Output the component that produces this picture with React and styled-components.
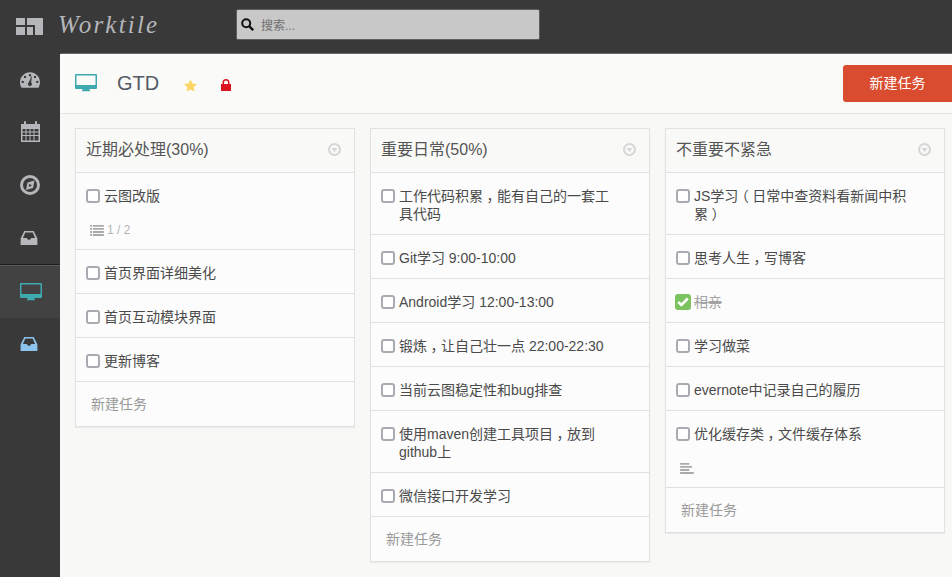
import React from 'react'
import styled, { createGlobalStyle } from 'styled-components'

const GlobalStyle = createGlobalStyle`
  html, body { margin: 0; padding: 0; height: 100%; background: #393939; overflow: hidden; }
  body { font-family: "Liberation Sans", "Noto Sans CJK SC", sans-serif; font-size: 14px; color: #444; }
  * { box-sizing: border-box; }
`

const Page = styled.div`
  width: 952px;
  height: 577px;
  display: flex;
  flex-direction: column;
  overflow: hidden;
`
const TopBar = styled.header`
  height: 53px;
  flex: none;
  display: flex;
  align-items: center;
  background: #393939;
`
const LogoMark = styled.svg`
  width: 27px;
  height: 17px;
  margin: -1px 0 0 16px;
  flex: none;
`
const LogoText = styled.span`
  width: 178px;
  margin: -3px 0 0 15px;
  font-family: "Liberation Serif", serif;
  font-style: italic;
  font-size: 25px;
  letter-spacing: 2.2px;
  color: #b4b6ba;
`
const SearchBox = styled.div`
  width: 304px;
  height: 31px;
  margin-top: -4px;
  display: flex;
  align-items: center;
  gap: 7px;
  padding: 0 0 1px 4px;
  background: #c8c8c8;
  border: 1px solid #5e5e5e;
  border-radius: 2px;
  font-size: 12px;
  color: #6f6f6f;
`
const Body = styled.div`
  flex: 1;
  min-height: 0;
  display: flex;
`
const Sidebar = styled.nav`
  width: 60px;
  flex: none;
  padding-top: 2px;
  background: #393939;
`
const NavGroup = styled.div`
  height: 210px;
  border-bottom: 1px solid #1f1f1f;
  box-shadow: 0 1px 0 #5a5a5a;
`
const NavItem = styled.div`
  height: 52px;
  display: flex;
  align-items: center;
  justify-content: center;
  padding: ${p => p.$pad || '0'};
  background: ${p => (p.$active ? '#424242' : 'transparent')};
`
const ActiveGap = styled.div`
  height: 1px;
`
const Main = styled.main`
  flex: 1;
  min-width: 0;
  background: #f8f8f7;
  border-top: 1px solid #6a6a6a;
  border-top-left-radius: 3px;
`
const BoardHeader = styled.div`
  height: 60px;
  display: flex;
  align-items: center;
  padding-left: 15px;
  background: #fafaf8;
  border-bottom: 1px solid #e3e3e3;
`
const BoardTitle = styled.h1`
  margin: 0 25px 0 20px;
  font-size: 20px;
  font-weight: 400;
  color: #555b66;
`
const LockIcon = styled.svg`
  margin: 2px 0 0 24px;
`
const StarIcon = styled.svg`
  margin-top: 3px;
`
const NewButton = styled.button`
  width: 109px;
  height: 37px;
  margin-left: auto;
  padding: 0 0 3px;
  border: 0;
  border-radius: 3px 0 0 3px;
  background: #d94c2f;
  color: #fff;
  font: inherit;
`
const Columns = styled.div`
  display: flex;
  align-items: flex-start;
  gap: 15px;
  padding: 14px 0 0 15px;
`
const Card = styled.section`
  width: 280px;
  flex: none;
  background: #fcfcfc;
  border: 1px solid #e1e1e1;
  box-shadow: 0 1px 1px rgba(0, 0, 0, 0.05);
`
const CardHead = styled.div`
  height: 44px;
  display: flex;
  align-items: center;
  justify-content: space-between;
  padding: 0 13px 2px 10px;
  background: #f9f9f8;
  border-bottom: 1px solid #e1e1e1;
  font-size: 16px;
  color: #555;
`
const CardTitle = styled.span`
  margin-bottom: 4px;
`
const Row = styled.div`
  border-bottom: 1px solid #e1e1e1;
  padding: 14px 28px 11px 10px;
`
const TaskLine = styled.div`
  display: flex;
  align-items: flex-start;
  gap: 4px;
  line-height: 18px;
  color: ${p => (p.$done ? '#a3a3a3' : '#4a4a4a')};
  text-decoration: ${p => (p.$done ? 'line-through' : 'none')};
`
const Box = styled.span`
  width: 14px;
  height: 14px;
  flex: none;
  margin-top: 2px;
  border: 2px solid #a9aab2;
  border-radius: 3px;
  background: #fff;
`
const DoneBox = styled.span`
  width: 16px;
  height: 16px;
  flex: none;
  margin: 1px -1px 0 -1px;
  display: flex;
  align-items: center;
  justify-content: center;
  border-radius: 3px;
  background: #7cc35f;
`
// half-width glyph with even padding, so the mark sits mid-cell like the reference font
const Punct = styled.span`
  font-feature-settings: "halt";
  padding: 0 3.5px;
`
const Meta = styled.div`
  height: 18px;
  margin: 16px 0 -1px 4px;
  display: flex;
  align-items: center;
  gap: 3px;
  font-size: 12px;
  color: #b4b4b4;
`
const AddTask = styled.div`
  height: 44px;
  padding-left: 15px;
  line-height: 44px;
  color: #9a9a9a;
`

const GaugeIcon = ({ color }) => (
  <svg width="20" height="16" viewBox="0 0 22 17">
    <path fill={color} fillRule="evenodd" d="M11 0C5 0 0 4.800 0 11c0 2.200.6 4.200 1.700 6h18.600C21.400 15.200 22 13.200 22 11 22 4.800 17 0 11 0zM11 2a1.300 1.300 0 1 1 0 2.600A1.300 1.300 0 0 1 11 2zM5.500 3.800a1.300 1.300 0 1 1 0 2.600 1.300 1.300 0 0 1 0-2.600zM16.500 3.800a1.300 1.300 0 1 1 0 2.600 1.300 1.300 0 0 1 0-2.600zM3 9.300a1.300 1.300 0 1 1 0 2.600 1.300 1.300 0 0 1 0-2.600zM19 9.300a1.300 1.300 0 1 1 0 2.600 1.300 1.300 0 0 1 0-2.600z" />
    <path fill="#393939" d="M12.600 4.500L13 4.700 12.300 11.200A2.200 2.200 0 1 1 9.800 11z" />
  </svg>
)

const CalendarIcon = ({ color }) => (
  <svg width="19" height="21" viewBox="0 0 19 21">
    <path fill={color} fillRule="evenodd" d="M0 3h3V1a1 1 0 0 1 2 0v2h9V1a1 1 0 0 1 2 0v2h3v18H0zM1.500 8v2.500h3V8zM5.500 8v2.500h3V8zM9.500 8v2.500h3V8zM13.500 8v2.500h4V8zM1.500 11.500V14h3v-2.500zM5.500 11.500V14h3v-2.500zM9.500 11.500V14h3v-2.500zM13.500 11.500V14h4v-2.500zM1.500 15v4.500h3V15zM5.500 15v4.500h3V15zM9.500 15v4.500h3V15zM13.500 15v4.500h4V15z" />
  </svg>
)

const CompassIcon = ({ color }) => (
  <svg width="20" height="20" viewBox="0 0 20 20">
    <circle cx="10" cy="10" r="8.500" fill="none" stroke={color} strokeWidth="3" />
    <path fill={color} d="M14.500 5.500L13 13 6 15 7.500 7.500z" />
    <path fill="#393939" d="M9.300 8.700L12 10.500 8.700 12z" />
  </svg>
)

const InboxIcon = ({ color }) => (
  <svg width="18" height="14" viewBox="0 0 18 15">
    <path fill={color} fillRule="evenodd" d="M4 0h10l4 8v7H0V8zM5 1.500L2.500 7.500h4L8 9.500h2l1.500-2h4L13 1.500z" />
  </svg>
)

const DesktopIcon = ({ color, screen = '#393939' }) => (
  <svg width="22" height="19" viewBox="0 0 22 19">
    <path fill={color} d="M1 0h20a1 1 0 0 1 1 1v13a1 1 0 0 1-1 1h-6.500l.5 2.200H7l.5-2.200H1a1 1 0 0 1-1-1V1a1 1 0 0 1 1-1z" />
    <rect x="1.500" y="1.500" width="19" height="9.500" fill={screen} />
  </svg>
)

const Chevron = () => (
  <svg width="13" height="13" viewBox="0 0 13 13">
    <circle cx="6.500" cy="6.500" r="5.500" fill="none" stroke="#d6d6d6" strokeWidth="2" />
    <path fill="#d6d6d6" d="M3.500 5h6l-3 4z" />
  </svg>
)

const ListIcon = () => (
  <svg width="14" height="11" viewBox="0 0 15 12">
    <path fill="#aaa" d="M0 0h2v2H0zM3 0h12v2H3zM0 3.300h2v2H0zM3 3.300h12v2H3zM0 6.600h2v2H0zM3 6.600h12v2H3zM0 9.900h2V12H0zM3 9.900h12V12H3z" />
  </svg>
)

const AlignIcon = () => (
  <svg width="14" height="11" viewBox="0 0 15 12">
    <path fill="#aaa" d="M0 0h10v2H0zM0 3.300h13v2H0zM0 6.600h10v2H0zM0 9.900h15V12H0z" />
  </svg>
)

const withPunct = text =>
  text.split(/([，（）])/).map((part, i) =>
    /^[，（）]$/.test(part) ? <Punct key={i}>{part}</Punct> : part
  )

const Task = ({ task }) => (
  <Row>
    <TaskLine $done={task.done}>
      {task.done ? (
        <DoneBox>
          <svg width="12" height="10" viewBox="0 0 12 10">
            <path fill="none" stroke="#fff" strokeWidth="2.600" d="M1.200 5l3.200 3L10.800 1.500" />
          </svg>
        </DoneBox>
      ) : (
        <Box />
      )}
      <span>{withPunct(task.text)}</span>
    </TaskLine>
    {task.meta === 'list' && (
      <Meta>
        <ListIcon />
        <span>1 / 2</span>
      </Meta>
    )}
    {task.meta === 'desc' && (
      <Meta>
        <AlignIcon />
      </Meta>
    )}
  </Row>
)

const columns = [
  {
    title: '近期必处理(30%)',
    tasks: [
      { text: '云图改版', meta: 'list' },
      { text: '首页界面详细美化' },
      { text: '首页互动模块界面' },
      { text: '更新博客' },
    ],
  },
  {
    title: '重要日常(50%)',
    tasks: [
      { text: '工作代码积累，能有自己的一套工具代码' },
      { text: 'Git学习 9:00-10:00' },
      { text: 'Android学习 12:00-13:00' },
      { text: '锻炼，让自己壮一点 22:00-22:30' },
      { text: '当前云图稳定性和bug排查' },
      { text: '使用maven创建工具项目，放到github上' },
      { text: '微信接口开发学习' },
    ],
  },
  {
    title: '不重要不紧急',
    tasks: [
      { text: 'JS学习（日常中查资料看新闻中积累）' },
      { text: '思考人生，写博客' },
      { text: '相亲', done: true },
      { text: '学习做菜' },
      { text: 'evernote中记录自己的履历' },
      { text: '优化缓存类，文件缓存体系', meta: 'desc' },
    ],
  },
]

export default function App() {
  return (
    <Page>
      <GlobalStyle />
      <TopBar>
        <LogoMark viewBox="0 0 27 17">
          <path fill="#b4b6ba" d="M0 0h9v7H0zM11 0h16v17h-8V7h-8zM0 9h9v8H0zM11 9h6v8h-6z" />
        </LogoMark>
        <LogoText>Worktile</LogoText>
        <SearchBox>
          <svg width="13" height="13" viewBox="0 0 13 13">
            <circle cx="5.200" cy="5.200" r="4" fill="none" stroke="#111" strokeWidth="2" />
            <path stroke="#111" strokeWidth="2.400" d="M8 8l4.200 4.200" />
          </svg>
          <span>搜索...</span>
        </SearchBox>
      </TopBar>
      <Body>
        <Sidebar>
          <NavGroup>
            <NavItem $pad="0 0 2px"><GaugeIcon color="#b5b7bb" /></NavItem>
            <NavItem $pad="0 0 4px"><CalendarIcon color="#b5b7bb" /></NavItem>
            <NavItem><CompassIcon color="#b5b7bb" /></NavItem>
            <NavItem $pad="2px 2px 0 0"><InboxIcon color="#b5b7bb" /></NavItem>
          </NavGroup>
          <ActiveGap />
          <NavItem $active $pad="0 0 0 2px">
            <DesktopIcon color="#3fa9b0" screen="#424242" />
          </NavItem>
          <NavItem $pad="0 2px 0 0"><InboxIcon color="#8cc4ee" /></NavItem>
        </Sidebar>
        <Main>
          <BoardHeader>
            <DesktopIcon color="#3fa9b0" screen="#fafaf8" />
            <BoardTitle>GTD</BoardTitle>
            <StarIcon width="13" height="13" viewBox="0 0 14 13">
              <path fill="#fcd664" d="M7 0l2.100 4.400 4.900.6-3.600 3.300.9 4.700L7 10.700 2.700 13l.9-4.700L0 5l4.900-.6z" />
            </StarIcon>
            <LockIcon width="10" height="12" viewBox="0 0 10 12">
              <path fill="#d9141e" fillRule="evenodd" d="M0 5h1.500V3.500a3.500 3.500 0 0 1 7 0V5H10v7H0zM3 5h4V3.500a2 2 0 0 0-4 0z" />
            </LockIcon>
            <NewButton>新建任务</NewButton>
          </BoardHeader>
          <Columns>
            {columns.map(col => (
              <Card key={col.title}>
                <CardHead>
                  <CardTitle>{col.title}</CardTitle>
                  <Chevron />
                </CardHead>
                {col.tasks.map(task => (
                  <Task key={task.text} task={task} />
                ))}
                <AddTask>新建任务</AddTask>
              </Card>
            ))}
          </Columns>
        </Main>
      </Body>
    </Page>
  )
}
